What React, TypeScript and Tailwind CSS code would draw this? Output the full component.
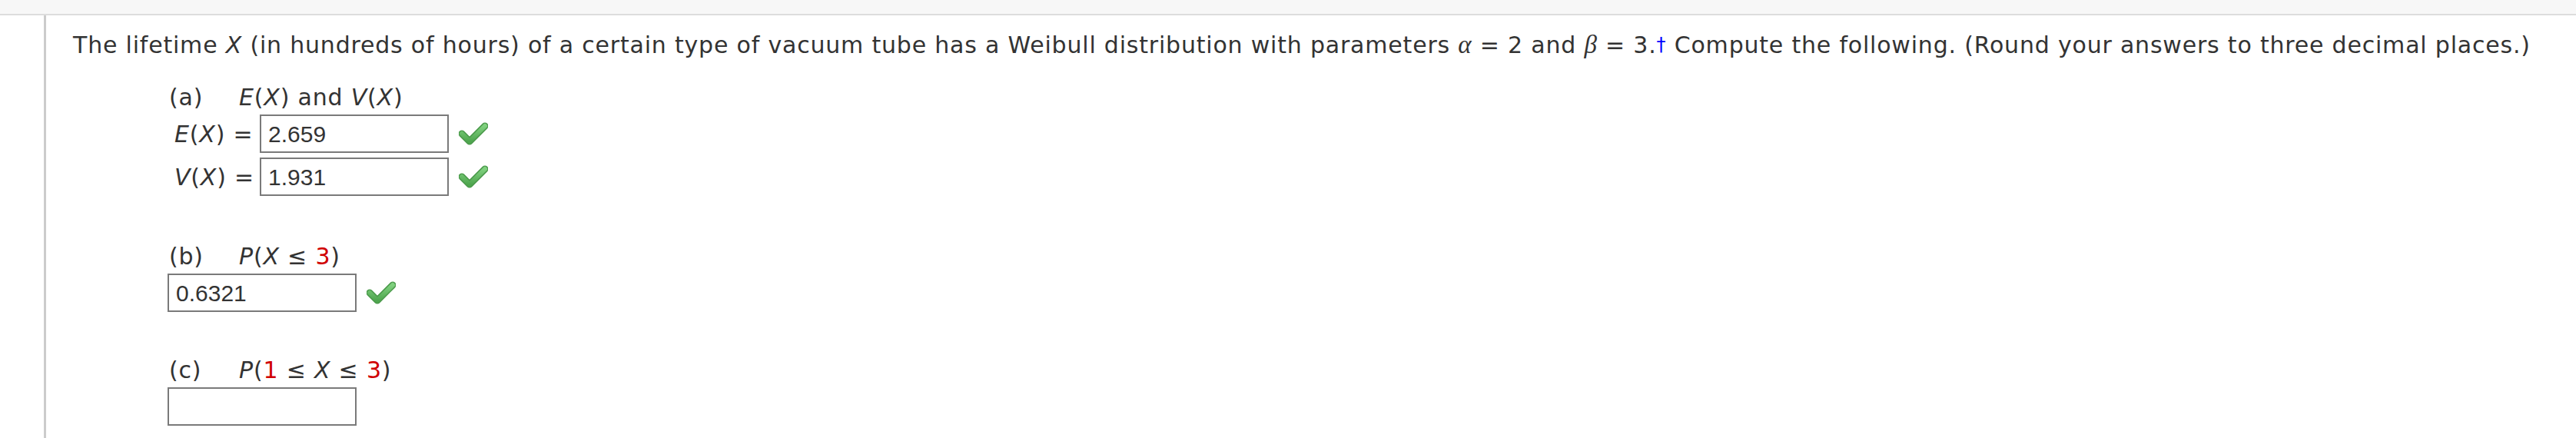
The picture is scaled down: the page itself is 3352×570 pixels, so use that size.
import React from 'react';

const Check: React.FC = () => (
  <svg width="38" height="30" viewBox="0 0 38 30" className="shrink-0">
    <defs>
      <linearGradient id="chk" x1="0" y1="0" x2="0" y2="1">
        <stop offset="0" stopColor="#7fd07e" />
        <stop offset="1" stopColor="#4fa64f" />
      </linearGradient>
    </defs>
    <polyline points="4,15 14,25 34,5" fill="none" stroke="#4b9a4b" strokeWidth="9" strokeLinecap="round" strokeLinejoin="round" />
    <polyline points="4,15 14,25 34,5" fill="none" stroke="url(#chk)" strokeWidth="6" strokeLinecap="round" strokeLinejoin="round" />
  </svg>
);

const Answer: React.FC<{ value?: string; correct?: boolean }> = ({ value = '', correct }) => (
  <div className="flex items-center gap-[13px]">
    <div className="w-[246px] h-[50px] border-2 border-[#7a7a7a] bg-white flex items-center pl-[9px] font-['Liberation_Sans',Arial,sans-serif] text-[30px] tracking-normal text-[#333]">
      {value}
    </div>
    {correct && <Check />}
  </div>
);

const Var: React.FC<{ children: React.ReactNode }> = ({ children }) => <i>{children}</i>;
const Red: React.FC<{ children: React.ReactNode }> = ({ children }) => <span className="text-[#d00000]">{children}</span>;

export default function App() {
  return (
    <div className="w-[3352px] h-[570px] bg-white overflow-hidden font-['Verdana','DejaVu_Sans',sans-serif] text-[#333]">
      <div className="h-[20px] bg-[#f7f7f7] border-b-2 border-[#dddddd]" />
      <div className="ml-[57px] h-[550px] border-l-[3px] border-[#cccccc] pl-[35px] pt-[16px] text-[30px] leading-[45px] tracking-[0.8px]">
        <p className="whitespace-nowrap">
          The lifetime <Var>X</Var> (in hundreds of hours) of a certain type of vacuum tube has a Weibull distribution with parameters{' '}
          <span className="font-['Liberation_Serif',serif] italic text-[33px]">α</span> = 2 and{' '}
          <span className="font-['Liberation_Serif',serif] italic text-[33px]">β</span> = 3.
          <span className="text-[#0000ff] text-[24px] align-[3px] leading-none">†</span> Compute the following. (Round your answers to three decimal places.)
        </p>

        <div className="ml-[125px]">
          <div className="mt-[23px] flex">
            <span className="w-[91px]">(a)</span>
            <span>
              <Var>E</Var>(<Var>X</Var>) and <Var>V</Var>(<Var>X</Var>)
            </span>
          </div>
          <div className="flex flex-col gap-[6px]">
            <div className="flex items-center">
              <span className="w-[118px] pl-[7px] whitespace-nowrap">
                <Var>E</Var>(<Var>X</Var>) =
              </span>
              <Answer value="2.659" correct />
            </div>
            <div className="flex items-center">
              <span className="w-[118px] pl-[7px] whitespace-nowrap">
                <Var>V</Var>(<Var>X</Var>) =
              </span>
              <Answer value="1.931" correct />
            </div>
          </div>

          <div className="mt-[56px] flex">
            <span className="w-[91px]">(b)</span>
            <span>
              <Var>P</Var>(<Var>X</Var> ≤ <Red>3</Red>)
            </span>
          </div>
          <div className="-ml-[2px]">
            <Answer value="0.6321" correct />
          </div>

          <div className="mt-[53px] flex">
            <span className="w-[91px]">(c)</span>
            <span>
              <Var>P</Var>(<Red>1</Red> ≤ <Var>X</Var> ≤ <Red>3</Red>)
            </span>
          </div>
          <div className="-ml-[2px]">
            <Answer />
          </div>
        </div>
      </div>
    </div>
  );
}
